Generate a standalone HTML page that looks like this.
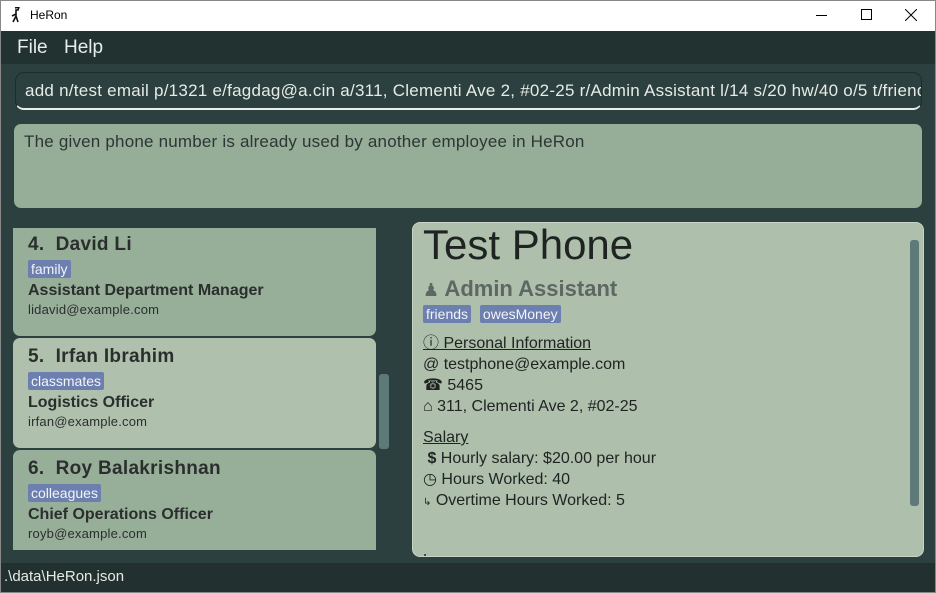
<!DOCTYPE html>
<html><head><meta charset="utf-8"><style>
*{margin:0;padding:0;box-sizing:border-box}
body{width:936px;height:593px;overflow:hidden;background:#2c403f;font-family:"Liberation Sans","DejaVu Sans",sans-serif;position:relative}
.abs{position:absolute}
.title{left:0;top:0;width:936px;height:31px;background:#fff;font-size:12px;color:#000}
.menu{left:0;top:31px;width:936px;height:33px;background:#223231;color:#e8ecea;font-size:19px}
.cmd{left:15px;top:72px;width:907px;height:38px;border:1px solid #1e2c2b;border-bottom:2px solid #e8eee8;border-radius:9px;color:#e6ebe6;font-size:17px;letter-spacing:.25px;padding:8px 9px;white-space:nowrap;overflow:hidden}
.res{left:14px;top:124px;width:908px;height:84px;background:#96ad98;border-radius:7px;color:#2d3636;font-size:17px;letter-spacing:.2px;padding:8px 10px}
.card{left:13px;width:363px;border-radius:7px;padding:0 15px;color:#2a2f2e}
.card h2{font-size:19px;font-weight:bold;letter-spacing:.3px}
.tag{display:inline-block;background:#6c7fae;color:#f2f4fa;font-size:14px;padding:1px 3px;border-radius:2px}
.card .job{font-size:16px;font-weight:bold;margin-top:3px}
.card .em{font-size:13px;margin-top:2px;letter-spacing:.2px}
.panel{left:412px;top:222px;width:512px;height:335px;background:#aebfab;border-radius:8px;border:1px solid #c8d3c6;overflow:hidden;color:#1f2322;padding-left:10px}
.row{font-size:16px;line-height:21px}
</style></head><body>
<div class="abs title">
<svg class="abs" style="left:10px;top:7px" width="14" height="17" viewBox="0 0 14 17"><path d="M5 1 L9 0 L8 3 L6 3 L6 9 L3 15 M6 9 L8 15 M2 9 L6 7" stroke="#111" stroke-width="1.6" fill="none"/></svg>
<div class="abs" style="left:30px;top:8px">HeRon</div>
<div class="abs" style="left:816px;top:15px;width:11px;height:1px;background:#000"></div>
<div class="abs" style="left:861px;top:9px;width:11px;height:11px;border:1px solid #000"></div>
<svg class="abs" style="left:905px;top:9px" width="12" height="12"><path d="M0 0L12 12M12 0L0 12" stroke="#000"/></svg>
</div>
<div class="abs menu"><span class="abs" style="left:17px;top:6px">File</span><span class="abs" style="left:64px;top:6px">Help</span></div>
<div class="abs cmd">add n/test email p/1321 e/fagdag@a.cin a/311, Clementi Ave 2, #02-25 r/Admin Assistant l/14 s/20 hw/40 o/5 t/friends</div>
<div class="abs res">The given phone number is already used by another employee in HeRon</div>

<div class="abs card" style="top:228px;height:108px;background:#97ae99;border-radius:0 0 7px 7px;padding-top:6px">
<h2>4.&nbsp; David Li</h2><div style="margin-top:4px"><span class="tag">family</span></div><div class="job">Assistant Department Manager</div><div class="em">lidavid@example.com</div></div>
<div class="abs card" style="top:338px;height:110px;background:#afc0ac;padding-top:8px">
<h2>5.&nbsp; Irfan Ibrahim</h2><div style="margin-top:4px"><span class="tag">classmates</span></div><div class="job">Logistics Officer</div><div class="em">irfan@example.com</div></div>
<div class="abs card" style="top:450px;height:100px;background:#97ae99;border-radius:7px 7px 0 0;padding-top:8px">
<h2>6.&nbsp; Roy Balakrishnan</h2><div style="margin-top:4px"><span class="tag">colleagues</span></div><div class="job">Chief Operations Officer</div><div class="em">royb@example.com</div></div>
<div class="abs" style="left:379px;top:374px;width:10px;height:75px;background:#5e7a78;border-radius:3px"></div>

<div class="abs panel">
<div style="font-size:42px;line-height:44px;margin-top:0;color:#1f2322">Test Phone</div>
<div style="font-size:22px;font-weight:bold;color:#5e6763;margin-top:9px"><span style="font-size:18px">&#9823;</span> Admin Assistant</div>
<div style="margin-top:3px"><span class="tag">friends</span>&nbsp;&nbsp;<span class="tag">owesMoney</span></div>
<div class="row" style="margin-top:9px;text-decoration:underline">ⓘ Personal Information</div>
<div class="row">@ testphone@example.com</div>
<div class="row">☎ 5465</div>
<div class="row">⌂ 311, Clementi Ave 2, #02-25</div>
<div class="row" style="margin-top:10px;text-decoration:underline">Salary</div>
<div class="row"><b>&nbsp;$</b> Hourly salary: $20.00 per hour</div>
<div class="row">◷ Hours Worked: 40</div>
<div class="row"><span style="font-size:10px">↳</span> Overtime Hours Worked: 5</div>
<div class="row" style="margin-top:37px">Leaves</div>
<div class="abs" style="left:497px;top:17px;width:9px;height:266px;background:#5e7a78;border-radius:3px"></div>
</div>
<div class="abs" style="left:0;top:563px;width:936px;height:30px;background:#223030;color:#e6ebe6;font-size:15px;padding:5px 4px">.\data\HeRon.json</div>
<div class="abs" style="left:0;top:0;width:936px;height:593px;border:1px solid #888;pointer-events:none"></div>
</body></html>
